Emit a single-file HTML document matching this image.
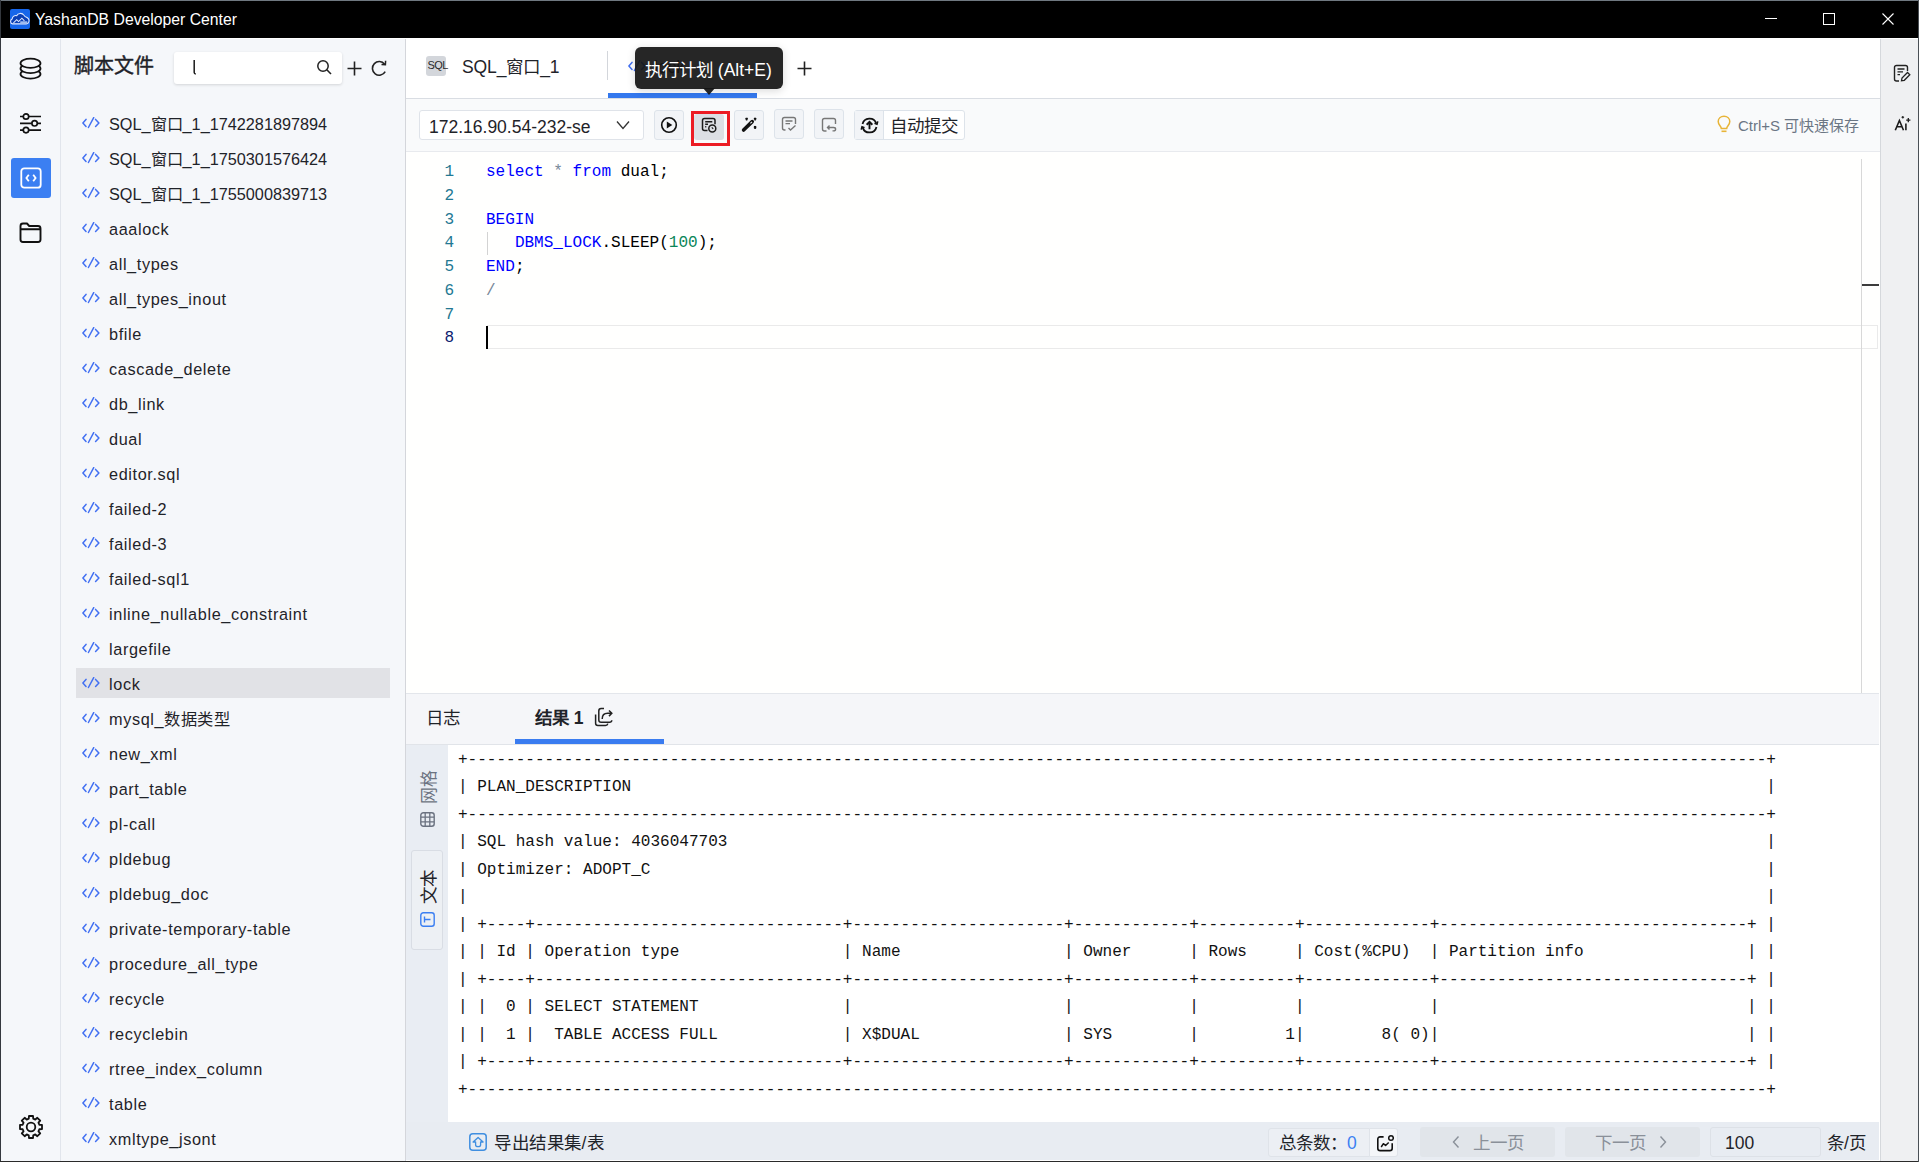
<!DOCTYPE html>
<html lang="zh-CN">
<head>
<meta charset="utf-8">
<style>
*{box-sizing:border-box;margin:0;padding:0}
html,body{width:1919px;height:1162px;overflow:hidden;background:#fff}
body{font-family:"Liberation Sans",sans-serif;color:#1f2329;position:relative}
.abs{position:absolute}
svg{display:block}
#titlebar{left:0;top:0;width:1919px;height:38px;background:#000;color:#fff;border-top:1px solid #6f7880}
#rail{left:0;top:38px;width:61px;height:1124px;background:#f5f7fa;border-right:1px solid #e1e5ec}
#side{left:61px;top:38px;width:345px;height:1124px;background:#f5f7fa;border-right:1px solid #d4d6db}
#tabbar{left:406px;top:38px;width:1474px;height:61px;background:#fff;border-bottom:1px solid #d9dde3}
#toolbar{left:406px;top:99px;width:1474px;height:53px;background:#f9fafb;border-bottom:1px solid #e8eaee}
#editor{left:406px;top:152px;width:1474px;height:541px;background:#fffffe}
#restabs{left:406px;top:693px;width:1473px;height:52px;background:#f5f6f9;border-top:1px solid #e3e6eb;border-bottom:1px solid #e1e4e9}
#resleft{left:406px;top:745px;width:42px;height:377px;background:#e9edf3}
#restext{left:448px;top:745px;width:1432px;height:377px;background:#fff}
#status{left:406px;top:1122px;width:1473px;height:38px;background:#e8ecf2}
#rrail{left:1880px;top:38px;width:39px;height:1124px;background:#eff0f2;border-left:1px solid #d5d8dc}
.item{position:absolute;left:76px;width:314px;height:30px}
.item.sel{background:#e1e2e6}
.item .ic{position:absolute;left:6px;top:9px}
.item .tx{position:absolute;left:33px;top:1px;line-height:30px;font-size:16.25px;color:#1f2329;white-space:nowrap}
.mono{font-family:"Liberation Mono",monospace;white-space:pre}
.btn{position:absolute;top:110px;width:30px;height:30px;background:#f2f4f7;border:1px solid #dde3ea;border-radius:3px}
.btn svg{position:absolute;left:6px;top:6px}
</style>
</head>
<body>
<div id="titlebar" class="abs">
  <svg class="abs" style="left:10px;top:8px" width="20" height="20" viewBox="0 0 20 20">
    <rect x="0" y="0" width="20" height="20" rx="2" fill="#1666ea"/>
    <g transform="translate(10 11) scale(1.17) translate(-10 -11.5)"><path d="M3.5 14.8 C1.6 14.5 1.4 11.4 3.3 10.6 C3.6 8.6 5.4 7.2 7.2 7.8 C8.2 5.6 11.6 5 13.4 7.4 C14 9.2 15.2 8.6 16.6 9.8 C18.6 11.4 17.6 14.8 15.4 14.8 Z" fill="#0a3fb4" stroke="#dfe8ff" stroke-width="0.9"/>
    <path d="M4.4 14 L7.2 11.2 L8.8 12.8 L11.6 10 L13.8 12.2" fill="none" stroke="#dfe8ff" stroke-width="0.9"/>
    <rect x="10.2" y="12.6" width="6" height="2" fill="#9fbcf0"/></g>
  </svg>
  <div class="abs" style="left:35px;top:0px;line-height:38px;font-size:15.75px;color:#fff">YashanDB Developer Center</div>
  <div class="abs" style="left:1765px;top:17px;width:12px;height:1px;background:#fff"></div>
  <div class="abs" style="left:1823px;top:12px;width:12px;height:12px;border:1px solid #fff"></div>
  <svg class="abs" style="left:1882px;top:12px" width="12" height="12" viewBox="0 0 12 12"><path d="M0.5 0.5 L11.5 11.5 M11.5 0.5 L0.5 11.5" stroke="#fff" stroke-width="1.1"/></svg>
</div>
<div id="rail" class="abs">
  <svg class="abs" style="left:18px;top:19px" width="25" height="25" viewBox="0 0 25 25">
    <ellipse cx="12.5" cy="17" rx="10" ry="4.6" fill="#f5f7fa" stroke="#111" stroke-width="1.8"/>
    <ellipse cx="12.5" cy="11.5" rx="10" ry="4.6" fill="#f5f7fa" stroke="#111" stroke-width="1.8"/>
    <ellipse cx="12.5" cy="6.2" rx="10" ry="4.6" fill="#f5f7fa" stroke="#111" stroke-width="1.8"/>
  </svg>
  <svg class="abs" style="left:18px;top:73px" width="25" height="25" viewBox="0 0 25 25">
    <path d="M2 5.5 H23 M2 12.3 H23 M2 19.1 H23" stroke="#111" stroke-width="1.7"/>
    <circle cx="8" cy="5.5" r="2.7" fill="#f5f7fa" stroke="#111" stroke-width="1.7"/>
    <circle cx="16.6" cy="12.3" r="2.7" fill="#f5f7fa" stroke="#111" stroke-width="1.7"/>
    <circle cx="8" cy="19.1" r="2.7" fill="#f5f7fa" stroke="#111" stroke-width="1.7"/>
  </svg>
  <div class="abs" style="left:11px;top:120px;width:40px;height:40px;background:#3b7ff2;border-radius:3px">
    <svg class="abs" style="left:8px;top:8px" width="24" height="24" viewBox="0 0 24 24">
      <rect x="2.3" y="2.3" width="19.4" height="19.4" rx="3" fill="none" stroke="#fff" stroke-width="1.8"/>
      <path d="M9.8 8.8 L7.4 12 L9.8 15.2 M14.2 8.8 L16.6 12 L14.2 15.2" fill="none" stroke="#fff" stroke-width="1.8"/>
    </svg>
  </div>
  <svg class="abs" style="left:18px;top:182px" width="25" height="25" viewBox="0 0 25 25">
    <path d="M2.5 6 C2.5 4.3 3.3 3.5 5 3.5 H9 L11.2 6 H20 C21.7 6 22.5 6.8 22.5 8.5 V19.5 C22.5 21.2 21.7 22 20 22 H5 C3.3 22 2.5 21.2 2.5 19.5 Z M2.5 9.2 H22.5" fill="none" stroke="#111" stroke-width="1.9" stroke-linejoin="round"/>
  </svg>
  <svg class="abs" style="left:18px;top:1076px" width="26" height="26" viewBox="0 0 26 26"><path d="M10.77 4.69 L10.96 1.99 L15.04 1.99 L15.23 4.69 L17.30 5.55 L19.34 3.77 L22.23 6.66 L20.45 8.70 L21.31 10.77 L24.01 10.96 L24.01 15.04 L21.31 15.23 L20.45 17.30 L22.23 19.34 L19.34 22.23 L17.30 20.45 L15.23 21.31 L15.04 24.01 L10.96 24.01 L10.77 21.31 L8.70 20.45 L6.66 22.23 L3.77 19.34 L5.55 17.30 L4.69 15.23 L1.99 15.04 L1.99 10.96 L4.69 10.77 L5.55 8.70 L3.77 6.66 L6.66 3.77 L8.70 5.55 Z" fill="none" stroke="#111" stroke-width="1.8" stroke-linejoin="round"/><circle cx="13" cy="13" r="4.3" fill="none" stroke="#111" stroke-width="1.8"/></svg>
</div>
<div id="side" class="abs">
  <div class="abs" style="left:13px;top:13px;line-height:30px;font-size:20px;-webkit-text-stroke:0.4px #1f2329;color:#1f2329">脚本文件</div>
  <div class="abs" style="left:113px;top:14px;width:168px;height:32px;background:#fff;border-radius:3px;box-shadow:0 1px 3px rgba(0,0,0,.14)">
    <svg class="abs" style="left:17px;top:6px" width="8" height="18" viewBox="0 0 8 18"><path d="M3.2 2 V14.6 C3.2 15.6 3.7 16 4.8 16" fill="none" stroke="#1b1b1b" stroke-width="1.5"/></svg>
    <svg class="abs" style="left:142px;top:7px" width="17" height="17" viewBox="0 0 17 17"><circle cx="7" cy="7" r="5.2" fill="none" stroke="#222" stroke-width="1.5"/><path d="M10.8 10.8 L15 15" stroke="#222" stroke-width="1.6"/></svg>
  </div>
  <svg class="abs" style="left:285px;top:22px" width="17" height="17" viewBox="0 0 17 17"><path d="M8.5 1.5 V15.5 M1.5 8.5 H15.5" stroke="#222" stroke-width="1.6"/></svg>
  <svg class="abs" style="left:309px;top:21px" width="18" height="18" viewBox="0 0 18 18"><path d="M14.6 5.2 A6.8 6.8 0 1 0 15.2 12.6" fill="none" stroke="#222" stroke-width="1.6"/><path d="M11.5 5.4 L15.4 5.6 L15.6 1.8" fill="none" stroke="#222" stroke-width="1.5"/></svg>
</div>
<div class="item" style="top:108px"><svg class="ic" width="20" height="12" viewBox="0 0 20 12"><path d="M4 2.4 L0.9 5.9 L4 9.4 M11.7 0.6 L6.4 10.5 M13.6 2.4 L16.9 5.9 L13.6 9.4" fill="none" stroke="#4270f2" stroke-width="1.5" stroke-linecap="round" stroke-linejoin="round"/></svg><span class="tx">SQL_窗口_1_1742281897894</span></div>
<div class="item" style="top:143px"><svg class="ic" width="20" height="12" viewBox="0 0 20 12"><path d="M4 2.4 L0.9 5.9 L4 9.4 M11.7 0.6 L6.4 10.5 M13.6 2.4 L16.9 5.9 L13.6 9.4" fill="none" stroke="#4270f2" stroke-width="1.5" stroke-linecap="round" stroke-linejoin="round"/></svg><span class="tx">SQL_窗口_1_1750301576424</span></div>
<div class="item" style="top:178px"><svg class="ic" width="20" height="12" viewBox="0 0 20 12"><path d="M4 2.4 L0.9 5.9 L4 9.4 M11.7 0.6 L6.4 10.5 M13.6 2.4 L16.9 5.9 L13.6 9.4" fill="none" stroke="#4270f2" stroke-width="1.5" stroke-linecap="round" stroke-linejoin="round"/></svg><span class="tx">SQL_窗口_1_1755000839713</span></div>
<div class="item" style="top:213px"><svg class="ic" width="20" height="12" viewBox="0 0 20 12"><path d="M4 2.4 L0.9 5.9 L4 9.4 M11.7 0.6 L6.4 10.5 M13.6 2.4 L16.9 5.9 L13.6 9.4" fill="none" stroke="#4270f2" stroke-width="1.5" stroke-linecap="round" stroke-linejoin="round"/></svg><span class="tx" style="letter-spacing:0.62px">aaalock</span></div>
<div class="item" style="top:248px"><svg class="ic" width="20" height="12" viewBox="0 0 20 12"><path d="M4 2.4 L0.9 5.9 L4 9.4 M11.7 0.6 L6.4 10.5 M13.6 2.4 L16.9 5.9 L13.6 9.4" fill="none" stroke="#4270f2" stroke-width="1.5" stroke-linecap="round" stroke-linejoin="round"/></svg><span class="tx" style="letter-spacing:0.62px">all_types</span></div>
<div class="item" style="top:283px"><svg class="ic" width="20" height="12" viewBox="0 0 20 12"><path d="M4 2.4 L0.9 5.9 L4 9.4 M11.7 0.6 L6.4 10.5 M13.6 2.4 L16.9 5.9 L13.6 9.4" fill="none" stroke="#4270f2" stroke-width="1.5" stroke-linecap="round" stroke-linejoin="round"/></svg><span class="tx" style="letter-spacing:0.62px">all_types_inout</span></div>
<div class="item" style="top:318px"><svg class="ic" width="20" height="12" viewBox="0 0 20 12"><path d="M4 2.4 L0.9 5.9 L4 9.4 M11.7 0.6 L6.4 10.5 M13.6 2.4 L16.9 5.9 L13.6 9.4" fill="none" stroke="#4270f2" stroke-width="1.5" stroke-linecap="round" stroke-linejoin="round"/></svg><span class="tx" style="letter-spacing:0.62px">bfile</span></div>
<div class="item" style="top:353px"><svg class="ic" width="20" height="12" viewBox="0 0 20 12"><path d="M4 2.4 L0.9 5.9 L4 9.4 M11.7 0.6 L6.4 10.5 M13.6 2.4 L16.9 5.9 L13.6 9.4" fill="none" stroke="#4270f2" stroke-width="1.5" stroke-linecap="round" stroke-linejoin="round"/></svg><span class="tx" style="letter-spacing:0.62px">cascade_delete</span></div>
<div class="item" style="top:388px"><svg class="ic" width="20" height="12" viewBox="0 0 20 12"><path d="M4 2.4 L0.9 5.9 L4 9.4 M11.7 0.6 L6.4 10.5 M13.6 2.4 L16.9 5.9 L13.6 9.4" fill="none" stroke="#4270f2" stroke-width="1.5" stroke-linecap="round" stroke-linejoin="round"/></svg><span class="tx" style="letter-spacing:0.62px">db_link</span></div>
<div class="item" style="top:423px"><svg class="ic" width="20" height="12" viewBox="0 0 20 12"><path d="M4 2.4 L0.9 5.9 L4 9.4 M11.7 0.6 L6.4 10.5 M13.6 2.4 L16.9 5.9 L13.6 9.4" fill="none" stroke="#4270f2" stroke-width="1.5" stroke-linecap="round" stroke-linejoin="round"/></svg><span class="tx" style="letter-spacing:0.62px">dual</span></div>
<div class="item" style="top:458px"><svg class="ic" width="20" height="12" viewBox="0 0 20 12"><path d="M4 2.4 L0.9 5.9 L4 9.4 M11.7 0.6 L6.4 10.5 M13.6 2.4 L16.9 5.9 L13.6 9.4" fill="none" stroke="#4270f2" stroke-width="1.5" stroke-linecap="round" stroke-linejoin="round"/></svg><span class="tx" style="letter-spacing:0.62px">editor.sql</span></div>
<div class="item" style="top:493px"><svg class="ic" width="20" height="12" viewBox="0 0 20 12"><path d="M4 2.4 L0.9 5.9 L4 9.4 M11.7 0.6 L6.4 10.5 M13.6 2.4 L16.9 5.9 L13.6 9.4" fill="none" stroke="#4270f2" stroke-width="1.5" stroke-linecap="round" stroke-linejoin="round"/></svg><span class="tx" style="letter-spacing:0.62px">failed-2</span></div>
<div class="item" style="top:528px"><svg class="ic" width="20" height="12" viewBox="0 0 20 12"><path d="M4 2.4 L0.9 5.9 L4 9.4 M11.7 0.6 L6.4 10.5 M13.6 2.4 L16.9 5.9 L13.6 9.4" fill="none" stroke="#4270f2" stroke-width="1.5" stroke-linecap="round" stroke-linejoin="round"/></svg><span class="tx" style="letter-spacing:0.62px">failed-3</span></div>
<div class="item" style="top:563px"><svg class="ic" width="20" height="12" viewBox="0 0 20 12"><path d="M4 2.4 L0.9 5.9 L4 9.4 M11.7 0.6 L6.4 10.5 M13.6 2.4 L16.9 5.9 L13.6 9.4" fill="none" stroke="#4270f2" stroke-width="1.5" stroke-linecap="round" stroke-linejoin="round"/></svg><span class="tx" style="letter-spacing:0.62px">failed-sql1</span></div>
<div class="item" style="top:598px"><svg class="ic" width="20" height="12" viewBox="0 0 20 12"><path d="M4 2.4 L0.9 5.9 L4 9.4 M11.7 0.6 L6.4 10.5 M13.6 2.4 L16.9 5.9 L13.6 9.4" fill="none" stroke="#4270f2" stroke-width="1.5" stroke-linecap="round" stroke-linejoin="round"/></svg><span class="tx" style="letter-spacing:0.62px">inline_nullable_constraint</span></div>
<div class="item" style="top:633px"><svg class="ic" width="20" height="12" viewBox="0 0 20 12"><path d="M4 2.4 L0.9 5.9 L4 9.4 M11.7 0.6 L6.4 10.5 M13.6 2.4 L16.9 5.9 L13.6 9.4" fill="none" stroke="#4270f2" stroke-width="1.5" stroke-linecap="round" stroke-linejoin="round"/></svg><span class="tx" style="letter-spacing:0.62px">largefile</span></div>
<div class="item sel" style="top:668px"><svg class="ic" width="20" height="12" viewBox="0 0 20 12"><path d="M4 2.4 L0.9 5.9 L4 9.4 M11.7 0.6 L6.4 10.5 M13.6 2.4 L16.9 5.9 L13.6 9.4" fill="none" stroke="#4270f2" stroke-width="1.5" stroke-linecap="round" stroke-linejoin="round"/></svg><span class="tx" style="letter-spacing:0.62px">lock</span></div>
<div class="item" style="top:703px"><svg class="ic" width="20" height="12" viewBox="0 0 20 12"><path d="M4 2.4 L0.9 5.9 L4 9.4 M11.7 0.6 L6.4 10.5 M13.6 2.4 L16.9 5.9 L13.6 9.4" fill="none" stroke="#4270f2" stroke-width="1.5" stroke-linecap="round" stroke-linejoin="round"/></svg><span class="tx" style="letter-spacing:0.62px">mysql_数据类型</span></div>
<div class="item" style="top:738px"><svg class="ic" width="20" height="12" viewBox="0 0 20 12"><path d="M4 2.4 L0.9 5.9 L4 9.4 M11.7 0.6 L6.4 10.5 M13.6 2.4 L16.9 5.9 L13.6 9.4" fill="none" stroke="#4270f2" stroke-width="1.5" stroke-linecap="round" stroke-linejoin="round"/></svg><span class="tx" style="letter-spacing:0.62px">new_xml</span></div>
<div class="item" style="top:773px"><svg class="ic" width="20" height="12" viewBox="0 0 20 12"><path d="M4 2.4 L0.9 5.9 L4 9.4 M11.7 0.6 L6.4 10.5 M13.6 2.4 L16.9 5.9 L13.6 9.4" fill="none" stroke="#4270f2" stroke-width="1.5" stroke-linecap="round" stroke-linejoin="round"/></svg><span class="tx" style="letter-spacing:0.62px">part_table</span></div>
<div class="item" style="top:808px"><svg class="ic" width="20" height="12" viewBox="0 0 20 12"><path d="M4 2.4 L0.9 5.9 L4 9.4 M11.7 0.6 L6.4 10.5 M13.6 2.4 L16.9 5.9 L13.6 9.4" fill="none" stroke="#4270f2" stroke-width="1.5" stroke-linecap="round" stroke-linejoin="round"/></svg><span class="tx" style="letter-spacing:0.62px">pl-call</span></div>
<div class="item" style="top:843px"><svg class="ic" width="20" height="12" viewBox="0 0 20 12"><path d="M4 2.4 L0.9 5.9 L4 9.4 M11.7 0.6 L6.4 10.5 M13.6 2.4 L16.9 5.9 L13.6 9.4" fill="none" stroke="#4270f2" stroke-width="1.5" stroke-linecap="round" stroke-linejoin="round"/></svg><span class="tx" style="letter-spacing:0.62px">pldebug</span></div>
<div class="item" style="top:878px"><svg class="ic" width="20" height="12" viewBox="0 0 20 12"><path d="M4 2.4 L0.9 5.9 L4 9.4 M11.7 0.6 L6.4 10.5 M13.6 2.4 L16.9 5.9 L13.6 9.4" fill="none" stroke="#4270f2" stroke-width="1.5" stroke-linecap="round" stroke-linejoin="round"/></svg><span class="tx" style="letter-spacing:0.62px">pldebug_doc</span></div>
<div class="item" style="top:913px"><svg class="ic" width="20" height="12" viewBox="0 0 20 12"><path d="M4 2.4 L0.9 5.9 L4 9.4 M11.7 0.6 L6.4 10.5 M13.6 2.4 L16.9 5.9 L13.6 9.4" fill="none" stroke="#4270f2" stroke-width="1.5" stroke-linecap="round" stroke-linejoin="round"/></svg><span class="tx" style="letter-spacing:0.62px">private-temporary-table</span></div>
<div class="item" style="top:948px"><svg class="ic" width="20" height="12" viewBox="0 0 20 12"><path d="M4 2.4 L0.9 5.9 L4 9.4 M11.7 0.6 L6.4 10.5 M13.6 2.4 L16.9 5.9 L13.6 9.4" fill="none" stroke="#4270f2" stroke-width="1.5" stroke-linecap="round" stroke-linejoin="round"/></svg><span class="tx" style="letter-spacing:0.62px">procedure_all_type</span></div>
<div class="item" style="top:983px"><svg class="ic" width="20" height="12" viewBox="0 0 20 12"><path d="M4 2.4 L0.9 5.9 L4 9.4 M11.7 0.6 L6.4 10.5 M13.6 2.4 L16.9 5.9 L13.6 9.4" fill="none" stroke="#4270f2" stroke-width="1.5" stroke-linecap="round" stroke-linejoin="round"/></svg><span class="tx" style="letter-spacing:0.62px">recycle</span></div>
<div class="item" style="top:1018px"><svg class="ic" width="20" height="12" viewBox="0 0 20 12"><path d="M4 2.4 L0.9 5.9 L4 9.4 M11.7 0.6 L6.4 10.5 M13.6 2.4 L16.9 5.9 L13.6 9.4" fill="none" stroke="#4270f2" stroke-width="1.5" stroke-linecap="round" stroke-linejoin="round"/></svg><span class="tx" style="letter-spacing:0.62px">recyclebin</span></div>
<div class="item" style="top:1053px"><svg class="ic" width="20" height="12" viewBox="0 0 20 12"><path d="M4 2.4 L0.9 5.9 L4 9.4 M11.7 0.6 L6.4 10.5 M13.6 2.4 L16.9 5.9 L13.6 9.4" fill="none" stroke="#4270f2" stroke-width="1.5" stroke-linecap="round" stroke-linejoin="round"/></svg><span class="tx" style="letter-spacing:0.62px">rtree_index_column</span></div>
<div class="item" style="top:1088px"><svg class="ic" width="20" height="12" viewBox="0 0 20 12"><path d="M4 2.4 L0.9 5.9 L4 9.4 M11.7 0.6 L6.4 10.5 M13.6 2.4 L16.9 5.9 L13.6 9.4" fill="none" stroke="#4270f2" stroke-width="1.5" stroke-linecap="round" stroke-linejoin="round"/></svg><span class="tx" style="letter-spacing:0.62px">table</span></div>
<div class="item" style="top:1123px"><svg class="ic" width="20" height="12" viewBox="0 0 20 12"><path d="M4 2.4 L0.9 5.9 L4 9.4 M11.7 0.6 L6.4 10.5 M13.6 2.4 L16.9 5.9 L13.6 9.4" fill="none" stroke="#4270f2" stroke-width="1.5" stroke-linecap="round" stroke-linejoin="round"/></svg><span class="tx" style="letter-spacing:0.62px">xmltype_jsont</span></div><div id="tabbar" class="abs">
  <div class="abs" style="left:20px;top:18px;width:20px;height:20px;background:#d3d6db;border-radius:3px"></div><div class="abs" style="left:21.5px;top:17.3px;font-size:11px;line-height:20px;color:#2a2a2a;letter-spacing:-0.6px;white-space:nowrap">SQL</div>
  <div class="abs" style="left:56px;top:14px;line-height:30px;font-size:17.5px;color:#1f2329;letter-spacing:-0.1px">SQL_窗口_1</div>
  <div class="abs" style="left:201px;top:13px;width:1px;height:29px;background:#d3d6db"></div>
  <svg class="abs" style="left:222px;top:22px" width="20" height="12" viewBox="0 0 20 12"><path d="M4 2.4 L0.9 5.9 L4 9.4 M11.7 0.6 L6.4 10.5 M13.6 2.4 L16.9 5.9 L13.6 9.4" fill="none" stroke="#4270f2" stroke-width="1.5" stroke-linecap="round" stroke-linejoin="round"/></svg>
  <div class="abs" style="left:248px;top:14px;line-height:30px;font-size:17.5px;color:#1f2329">lock</div>
  <div class="abs" style="left:202px;top:55px;width:149px;height:5px;background:#3478ee"></div>
  <svg class="abs" style="left:390px;top:22px" width="17" height="17" viewBox="0 0 17 17"><path d="M8.5 1.5 V15.5 M1.5 8.5 H15.5" stroke="#222" stroke-width="1.6"/></svg>
</div>
<div id="toolbar" class="abs">
  <div class="abs" style="left:13px;top:11px;width:225px;height:30px;background:#fff;border:1px solid #dfe3e9;border-radius:3px">
    <div class="abs" style="left:9px;top:1.5px;line-height:28px;font-size:17.5px;color:#1f2329">172.16.90.54-232-se</div>
    <svg class="abs" style="left:196px;top:9px" width="14" height="10" viewBox="0 0 14 10"><path d="M1 1.5 L7 8.5 L13 1.5" fill="none" stroke="#333" stroke-width="1.3"/></svg>
  </div>
</div>
<div class="btn" style="left:654px"><svg width="18" height="18" viewBox="0 0 18 18" style="left:5px;top:5px"><circle cx="9" cy="9" r="7.3" fill="none" stroke="#111" stroke-width="1.6"/><path d="M6.8 5.4 L12.3 9 L6.8 12.6 Z" fill="#111"/></svg></div>
<div class="abs" style="left:694px;top:114px;width:30px;height:26px;background:#dcdfe4;border-radius:3px">
  <svg class="abs" style="left:6px;top:2px" width="18" height="18" viewBox="0 0 18 18"><path d="M7.5 14.5 H4.5 C3.3 14.5 2.5 13.7 2.5 12.5 V4.5 C2.5 3.3 3.3 2.5 4.5 2.5 H13 C14.2 2.5 15 3.3 15 4.5 V8.2" fill="none" stroke="#1b1b1b" stroke-width="1.5"/><path d="M5.2 5.7 H12.3 M5.2 8.2 H8 M5.2 10.8 H6.3" stroke="#1b1b1b" stroke-width="1.4"/><circle cx="12.3" cy="12.6" r="3.5" fill="#dcdfe4" stroke="#1b1b1b" stroke-width="1.5"/><path d="M11.8 11.3 L13.2 12.8" stroke="#1b1b1b" stroke-width="1.1"/></svg>
</div>
<div class="abs" style="left:691px;top:111px;width:39px;height:35px;border:3px solid #ec1c24"></div>
<div class="btn" style="left:734px"><svg width="18" height="18" viewBox="0 0 18 18"><path d="M2.6 13 L11.2 4.6" stroke="#111" stroke-width="3.6" stroke-linecap="round"/><path d="M9.4 6.4 L11 4.8" stroke="#f2f4f7" stroke-width="1.1"/><path d="M4.6 1 L6.6 3 M6.6 1 L4.6 3 M13.1 1 L15.1 3 M15.1 1 L13.1 3 M13.1 9.4 L15.1 11.4 M15.1 9.4 L13.1 11.4" stroke="#111" stroke-width="1.5"/></svg></div>
<div class="btn" style="left:774px;top:109px"><svg style="left:5px;top:5px" width="18" height="18" viewBox="0 0 18 18"><path d="M5.5 15 H4.5 C3.3 15 2.5 14.2 2.5 13 V4.5 C2.5 3.3 3.3 2.5 4.5 2.5 H13.5 C14.7 2.5 15.5 3.3 15.5 4.5 V9" fill="none" stroke="#777" stroke-width="1.4"/><path d="M5.5 6 H12.5 M5.5 8.6 H10" stroke="#777" stroke-width="1.3"/><path d="M8.5 13 L10.5 15 L15.5 10.5" fill="none" stroke="#777" stroke-width="1.4"/></svg></div>
<div class="btn" style="left:814px;top:109px"><svg style="left:5px;top:5.5px" width="18" height="18" viewBox="0 0 18 18"><path d="M6.5 15 H4.5 C3.3 15 2.5 14.2 2.5 13 V4.5 C2.5 3.3 3.3 2.5 4.5 2.5 H13.5 C14.7 2.5 15.5 3.3 15.5 4.5 V8" fill="none" stroke="#777" stroke-width="1.4"/><path d="M9.5 9.5 L7.5 11.5 L9.5 13.5 M7.7 11.5 H13.5 C15 11.5 15.6 12.3 15.6 13.2 C15.6 14.1 15 14.9 13.5 14.9 H12.5" fill="none" stroke="#777" stroke-width="1.4"/></svg></div>
<div class="abs" style="left:854px;top:110px;width:111px;height:30px;background:#fff;border:1px solid #dde3ea;border-radius:3px">
  <div class="abs" style="left:0;top:0;width:29px;height:28px;background:#f2f4f7;border-right:1px solid #dde3ea"></div>
  <svg class="abs" style="left:4px;top:3.5px" width="21" height="21" viewBox="0 0 19 19"><path d="M3.2 8.2 A6.5 6.5 0 0 1 15.6 7.4 M15.8 10.8 A6.5 6.5 0 0 1 3.4 11.6" fill="none" stroke="#111" stroke-width="1.6"/><path d="M14 7.5 L16.3 8.3 L17 5.8 M5 11.5 L2.7 10.7 L2 13.2" fill="none" stroke="#111" stroke-width="1.4"/><path d="M9.5 13 V6.3 M6.9 8.8 L9.5 6.2 L12.1 8.8" fill="none" stroke="#111" stroke-width="1.7"/></svg>
  <div class="abs" style="left:35px;top:1px;line-height:28px;font-size:17.5px;color:#1f2329">自动提交</div>
</div>
<svg class="abs" style="left:1716px;top:115px" width="16" height="19" viewBox="0 0 16 19"><path d="M5.3 13.5 C5.3 11.3 2.2 9.8 2.2 6.5 C2.2 3.5 4.7 1.2 8 1.2 C11.3 1.2 13.8 3.5 13.8 6.5 C13.8 9.8 10.7 11.3 10.7 13.5 Z" fill="none" stroke="#e8b437" stroke-width="1.5"/><path d="M5.5 16.3 H10.5" stroke="#e8b437" stroke-width="1.6"/></svg>
<div class="abs" style="left:1738px;top:111px;line-height:30px;font-size:15px;color:#6b7684">Ctrl+S 可快速保存</div>
<div id="editor" class="abs">
  <div class="abs" style="left:81px;top:173px;width:1391px;height:24px;border:1px solid #eaeaea"></div>
  <div class="abs" style="left:1455px;top:7px;width:1px;height:534px;background:#d8d8d8"></div>
  <div class="abs" style="left:1456px;top:132px;width:17px;height:2px;background:#3c3c3c"></div>
  <div class="abs" style="left:80px;top:174px;width:2px;height:23px;background:#000"></div>
  <div class="abs" style="left:81px;top:80px;width:1px;height:23px;background:#d3d3d3"></div>
  <div class="abs mono" id="lnums" style="left:0;top:9px;width:48px;text-align:right;font-size:16.04px;line-height:23.75px;color:#237893">1
2
3
4
5
6
7
<span style="color:#0b216f">8</span></div>
  <div class="abs mono" id="code" style="left:80px;top:9px;font-size:16.04px;line-height:23.75px;color:#000"><span style="color:#0000ff">select</span> <span style="color:#778899">*</span> <span style="color:#0000ff">from</span> dual;

<span style="color:#0000ff">BEGIN</span>
   <span style="color:#0000ff">DBMS_LOCK</span>.SLEEP(<span style="color:#098658">100</span>);
<span style="color:#0000ff">END</span>;
<span style="color:#778899">/</span>

</div>
</div>
<div class="abs" style="left:635px;top:47px;width:148px;height:42px;background:rgba(20,20,20,0.92);border-radius:6px;box-shadow:0 2px 8px rgba(0,0,0,.15)"></div>
<div class="abs" style="left:703px;top:88px;width:0;height:0;border-left:6px solid transparent;border-right:6px solid transparent;border-top:7px solid rgba(20,20,20,0.92)"></div>
<div class="abs" style="left:645px;top:55px;line-height:30px;font-size:17.5px;color:#fff;white-space:nowrap">执行计划 (Alt+E)</div>
<div id="restabs" class="abs">
  <div class="abs" style="left:20px;top:9px;line-height:30px;font-size:17.5px;color:#1f2329">日志</div>
  <div class="abs" style="left:129px;top:9px;line-height:30px;font-size:17.5px;font-weight:700;color:#1f2329">结果 1</div>
  <svg class="abs" style="left:188px;top:13px" width="20" height="20" viewBox="0 0 20 20"><path d="M1.6 7.5 V16.2 C1.6 17.6 2.4 18.4 3.8 18.4 H11.5 C12.9 18.4 13.6 17.8 13.8 16.6" fill="none" stroke="#222" stroke-width="1.5"/><path d="M10 1.6 H7.1 C5.6 1.6 4.8 2.4 4.8 3.9 V13 C4.8 14.5 5.6 15.3 7.1 15.3 H15.6 C17.1 15.3 17.7 14.6 17.8 13.3" fill="none" stroke="#222" stroke-width="1.5"/><path d="M8.2 12 C8.2 8.2 10 6.3 13.6 6.3 H17.6 M15 3.5 L17.8 6.3 L15 9.1" fill="none" stroke="#222" stroke-width="1.5"/></svg>
  <div class="abs" style="left:109px;top:45px;width:149px;height:5px;background:#3a7cf0"></div>
</div>
<div id="resleft" class="abs">
  <div class="abs" style="left:5px;top:105px;width:32px;height:100px;background:#edf0f4;border:1px solid #d9dde4;border-radius:3px"></div>
  <div class="abs" style="left:6px;top:28px;width:30px;height:30px;transform:rotate(-90deg);transform-origin:center"></div>
</div>
<div id="restext" class="abs">
  <div class="abs mono" style="left:10px;top:2px;font-size:16.04px;line-height:27.49px;color:#111">+---------------------------------------------------------------------------------------------------------------------------------------+
| PLAN_DESCRIPTION                                                                                                                      |
+---------------------------------------------------------------------------------------------------------------------------------------+
| SQL hash value: 4036047703                                                                                                            |
| Optimizer: ADOPT_C                                                                                                                    |
|                                                                                                                                       |
| +----+--------------------------------+----------------------+------------+----------+-------------+--------------------------------+ |
| | Id | Operation type                 | Name                 | Owner      | Rows     | Cost(%CPU)  | Partition info                 | |
| +----+--------------------------------+----------------------+------------+----------+-------------+--------------------------------+ |
| |  0 | SELECT STATEMENT               |                      |            |          |             |                                | |
| |  1 |  TABLE ACCESS FULL             | X$DUAL               | SYS        |         1|        8( 0)|                                | |
| +----+--------------------------------+----------------------+------------+----------+-------------+--------------------------------+ |
+---------------------------------------------------------------------------------------------------------------------------------------+</div>
</div>
<div class="abs" style="left:409.5px;top:776px;width:40px;height:22px;transform:rotate(-90deg);font-size:17px;line-height:22px;text-align:center;color:#6b7280;white-space:nowrap">网格</div>
<svg class="abs" style="left:420px;top:812px" width="15" height="15" viewBox="0 0 15 15"><rect x="0.8" y="0.8" width="13.4" height="13.4" rx="2.5" fill="none" stroke="#6b7280" stroke-width="1.4"/><path d="M5.2 1 V14 M9.8 1 V14 M1 5.2 H14 M1 9.8 H14" stroke="#6b7280" stroke-width="1.3"/></svg>
<div class="abs" style="left:408.5px;top:876px;width:40px;height:22px;transform:rotate(-90deg);font-size:17.5px;line-height:22px;text-align:center;color:#1f2329;white-space:nowrap">文本</div>
<svg class="abs" style="left:420px;top:912px" width="15" height="15" viewBox="0 0 15 15"><rect x="0.8" y="0.8" width="13.4" height="13.4" rx="2.5" fill="none" stroke="#3b7ff2" stroke-width="1.4"/><path d="M4.5 4.5 V10.5 M4.5 7.5 H10.5" stroke="#3b7ff2" stroke-width="1.4"/></svg>
<div id="status" class="abs">
  <svg class="abs" style="left:63px;top:11px" width="18" height="18" viewBox="0 0 18 18"><rect x="0.8" y="0.8" width="16.4" height="16.4" rx="3" fill="none" stroke="#3f8ee0" stroke-width="1.5"/><path d="M9.1 4.4 L4.1 9 H6.6 V12 C6.6 13.2 7.4 13.7 9.1 13.7 C10.8 13.7 11.6 13.2 11.6 12 V9 H14.1 Z" fill="none" stroke="#3f8ee0" stroke-width="1.3" stroke-linejoin="round"/></svg>
  <div class="abs" style="left:88px;top:5.5px;line-height:30px;font-size:17.5px;color:#1f2329;letter-spacing:0.5px">导出结果集/表</div>
  <div class="abs" style="left:862px;top:5.5px;width:102px;height:29px;background:#eceff4;border:1px solid #dfe3e9;border-radius:3px 0 0 3px"></div>
  <div class="abs" style="left:873px;top:5.5px;line-height:30px;font-size:17.5px;color:#1f2329">总条数：<span style="color:#3b7ff2">0</span></div>
  <div class="abs" style="left:964px;top:5.5px;width:28px;height:29px;background:#f4f6f9;border:1px solid #dfe3e9;border-left:none;border-radius:0 3px 3px 0">
    <svg class="abs" style="left:5px;top:5.5px" width="19" height="19" viewBox="0 0 19 19"><path d="M8.6 2.9 H5.2 C3.6 2.9 2.8 3.7 2.8 5.3 V14.2 C2.8 15.8 3.6 16.6 5.2 16.6 H14.8 C16.4 16.6 17.2 15.8 17.2 14.2 V9.2" fill="none" stroke="#111" stroke-width="1.6"/><path d="M6.2 13 L8.4 9.7 L10.6 11.5 L13.7 8.5" fill="none" stroke="#111" stroke-width="1.5" stroke-linejoin="round"/><circle cx="16" cy="4" r="2.3" fill="none" stroke="#111" stroke-width="1.5"/></svg>
  </div>
  <div class="abs" style="left:1014px;top:5px;width:135px;height:30px;background:#e1e5ea;border-radius:3px"></div>
  <svg class="abs" style="left:1045px;top:13px" width="10" height="14" viewBox="0 0 10 14"><path d="M7.5 1.5 L2.5 7 L7.5 12.5" fill="none" stroke="#8a9099" stroke-width="1.4"/></svg>
  <div class="abs" style="left:1067px;top:5.5px;line-height:30px;font-size:17.5px;color:#8a9099">上一页</div>
  <div class="abs" style="left:1159px;top:5px;width:135px;height:30px;background:#e1e5ea;border-radius:3px"></div>
  <div class="abs" style="left:1189px;top:5.5px;line-height:30px;font-size:17.5px;color:#8a9099">下一页</div>
  <svg class="abs" style="left:1252px;top:13px" width="10" height="14" viewBox="0 0 10 14"><path d="M2.5 1.5 L7.5 7 L2.5 12.5" fill="none" stroke="#8a9099" stroke-width="1.4"/></svg>
  <div class="abs" style="left:1304px;top:5px;width:111px;height:30px;background:#e8ecf2;border:1px solid #dde1e7;border-radius:3px"></div>
  <div class="abs" style="left:1319px;top:5.5px;line-height:30px;font-size:17.5px;color:#1f2329">100</div>
  <div class="abs" style="left:1421px;top:5.5px;line-height:30px;font-size:17.5px;color:#1f2329">条/页</div>
</div>
<div id="rrail" class="abs">
  <svg class="abs" style="left:11px;top:26px" width="19" height="19" viewBox="0 0 19 19"><path d="M7 17 H4.5 C3.3 17 2.5 16.2 2.5 15 V3.5 C2.5 2.3 3.3 1.5 4.5 1.5 H13.5 C14.7 1.5 15.5 2.3 15.5 3.5 V7" fill="none" stroke="#222" stroke-width="1.4"/><path d="M5.5 5 H12.5 M5.5 7.8 H11 M5.5 10.6 H8" stroke="#222" stroke-width="1.3"/><path d="M9.5 16.8 L10 14 L15.5 8.5 L17.8 10.8 L12.3 16.3 Z" fill="none" stroke="#222" stroke-width="1.3"/></svg>
  <svg class="abs" style="left:12px;top:76px" width="20" height="18" viewBox="0 0 20 18"><path d="M2.3 16.3 L6.4 6.5 L10.5 16.3 M3.9 12.8 H8.9" fill="none" stroke="#1b1b1b" stroke-width="1.6"/><path d="M12.9 9.6 V16.3" stroke="#1b1b1b" stroke-width="1.6"/><path d="M9.8 1.9 V4.5 M8.5 3.2 H11.1" stroke="#1b1b1b" stroke-width="1.1"/><path d="M15.3 4 V8.2 M13.2 6.1 H17.4" stroke="#1b1b1b" stroke-width="1.3"/></svg>
</div>
<div class="abs" style="left:0;top:38px;width:1919px;height:1px;background:#fff"></div>
<div class="abs" style="left:0;top:0;width:1px;height:1162px;background:#34383e"></div>
<div class="abs" style="left:0;top:1161px;width:1919px;height:1px;background:#2a2a2a"></div>
<div class="abs" style="left:1918px;top:0;width:1px;height:1162px;background:#4a5056"></div>
</body>
</html>
